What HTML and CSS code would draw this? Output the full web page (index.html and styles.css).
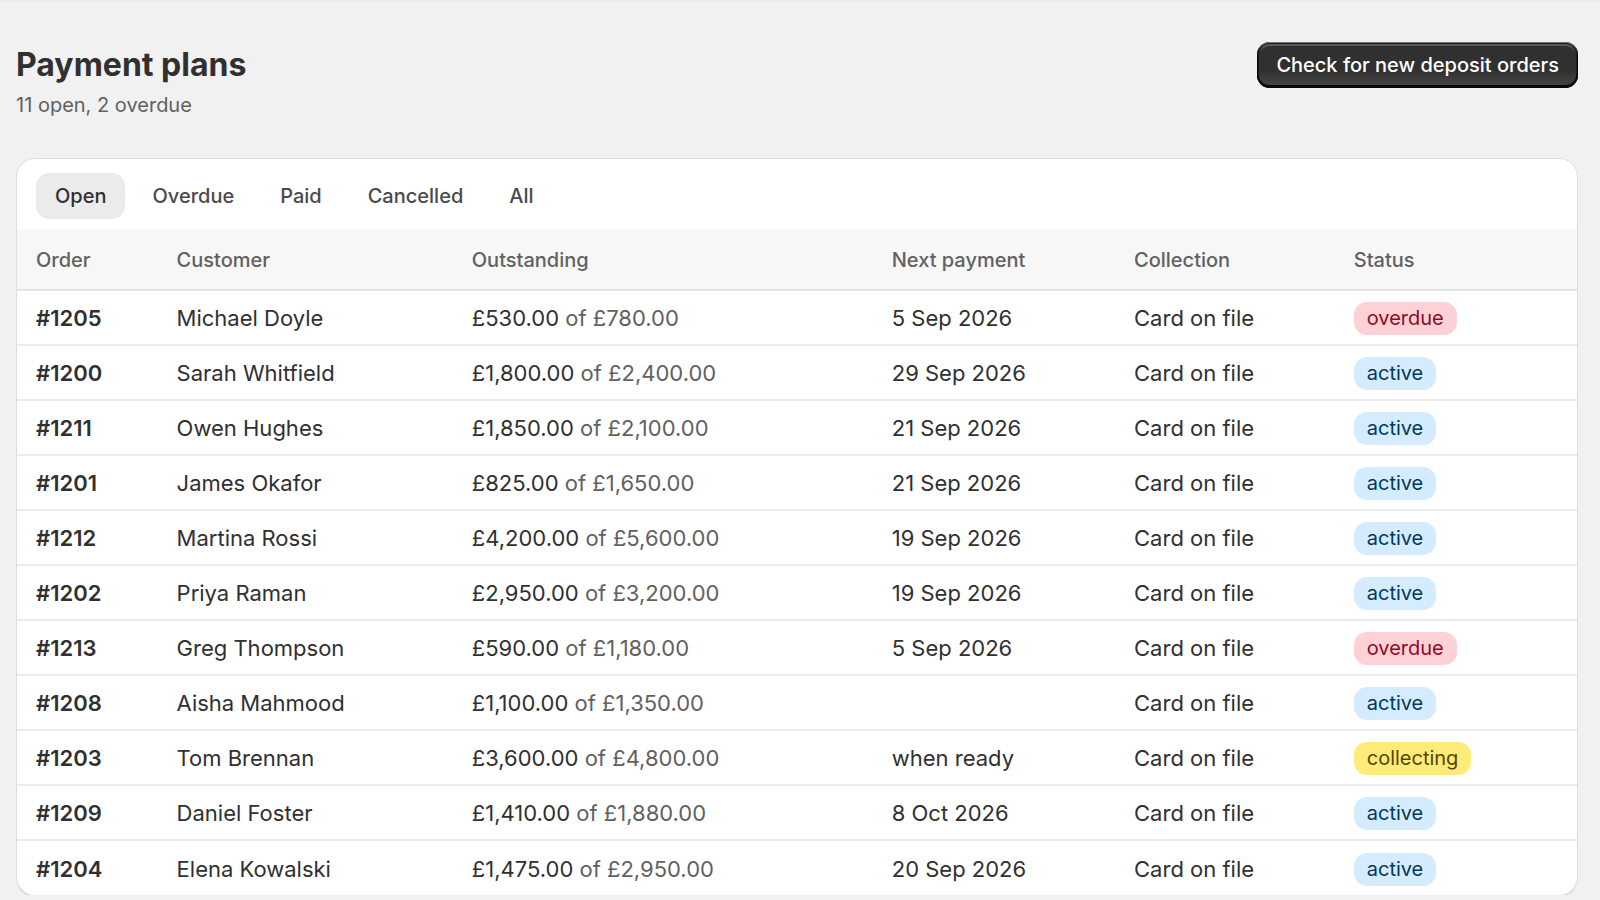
FILE: index.html
```html
<!DOCTYPE html>
<html lang="en">
	<head>
		<meta charset="utf-8" />
		<meta name="viewport" content="width=device-width, initial-scale=1" />
		<title>Payment plans</title>
		<link rel="stylesheet" href="styles.css">
	</head>
	<body>
		<main>
			<header>
				<div>
					<h1>Payment plans</h1>
					<p>11 open, 2 overdue</p>
				</div>
				<button type="button" class="primary">Check for new deposit orders</button>
			</header>

			<section class="card">
				<nav class="tabs">
					<button type="button" class="tab selected" aria-pressed="true">Open</button>
					<button type="button" class="tab">Overdue</button>
					<button type="button" class="tab">Paid</button>
					<button type="button" class="tab">Cancelled</button>
					<button type="button" class="tab">All</button>
				</nav>

				<table>
					<thead>
						<tr><th>Order</th><th>Customer</th><th>Outstanding</th><th>Next payment</th><th>Collection</th><th>Status</th></tr>
					</thead>
					<tbody>
						<tr><td>#1205</td><td>Michael Doyle</td><td>£530.00 <span class="total">of £780.00</span></td><td>5 Sep 2026</td><td>Card on file</td><td><span class="badge overdue">overdue</span></td></tr>
						<tr><td>#1200</td><td>Sarah Whitfield</td><td>£1,800.00 <span class="total">of £2,400.00</span></td><td>29 Sep 2026</td><td>Card on file</td><td><span class="badge active">active</span></td></tr>
						<tr><td>#1211</td><td>Owen Hughes</td><td>£1,850.00 <span class="total">of £2,100.00</span></td><td>21 Sep 2026</td><td>Card on file</td><td><span class="badge active">active</span></td></tr>
						<tr><td>#1201</td><td>James Okafor</td><td>£825.00 <span class="total">of £1,650.00</span></td><td>21 Sep 2026</td><td>Card on file</td><td><span class="badge active">active</span></td></tr>
						<tr><td>#1212</td><td>Martina Rossi</td><td>£4,200.00 <span class="total">of £5,600.00</span></td><td>19 Sep 2026</td><td>Card on file</td><td><span class="badge active">active</span></td></tr>
						<tr><td>#1202</td><td>Priya Raman</td><td>£2,950.00 <span class="total">of £3,200.00</span></td><td>19 Sep 2026</td><td>Card on file</td><td><span class="badge active">active</span></td></tr>
						<tr><td>#1213</td><td>Greg Thompson</td><td>£590.00 <span class="total">of £1,180.00</span></td><td>5 Sep 2026</td><td>Card on file</td><td><span class="badge overdue">overdue</span></td></tr>
						<tr><td>#1208</td><td>Aisha Mahmood</td><td>£1,100.00 <span class="total">of £1,350.00</span></td><td></td><td>Card on file</td><td><span class="badge active">active</span></td></tr>
						<tr><td>#1203</td><td>Tom Brennan</td><td>£3,600.00 <span class="total">of £4,800.00</span></td><td>when ready</td><td>Card on file</td><td><span class="badge collecting">collecting</span></td></tr>
						<tr><td>#1209</td><td>Daniel Foster</td><td>£1,410.00 <span class="total">of £1,880.00</span></td><td>8 Oct 2026</td><td>Card on file</td><td><span class="badge active">active</span></td></tr>
						<tr><td>#1204</td><td>Elena Kowalski</td><td>£1,475.00 <span class="total">of £2,950.00</span></td><td>20 Sep 2026</td><td>Card on file</td><td><span class="badge active">active</span></td></tr>
					</tbody>
				</table>
			</section>
		</main>
	</body>
</html>
```
FILE: styles.css
```css
:root {
	--text: #303030;
	--subdued: #616161;
	--line: #ebebeb;
}

* {
	box-sizing: border-box;
	margin: 0;
	padding: 0;
}

body {
	background: #f1f1f1;
	color: var(--text);
	font: 400 22px/33px Inter, sans-serif;
	border-top: 2px solid var(--line);
}

button {
	border: 0;
	font: inherit;
	cursor: pointer;
}

main {
	padding: 40px 22px 0 16px;
}

header {
	display: flex;
	justify-content: space-between;
	align-items: flex-start;
	margin-bottom: 37px;
}

h1 {
	margin-bottom: 1px;
	font-size: 32px;
	font-weight: 700;
	line-height: 46px;
}

header p {
	color: var(--subdued);
	font-size: 20px;
}

.primary {
	height: 46px;
	padding: 0 19px;
	border-radius: 13px;
	background: linear-gradient(#303030 63%, #4a4a4a);
	box-shadow: inset 0 1px 0 #777, inset 0 -2px 0 1px #0a0a0a, inset 0 0 0 2px #1a1a1a, inset 0 3px 0 1px #5a5a5a;
	color: #fff;
	font-size: 20px;
	font-weight: 500;
}

.card {
	overflow: hidden;
	margin: 0 1px;
	border-radius: 18px;
	background: #fff;
	box-shadow: 0 0 0 1px #dedede, 0 2px 1px #ccc;
}

.tabs {
	display: flex;
	gap: 8px;
	padding: 14px 19px 11px;
}

.tab {
	height: 46px;
	padding: 0 19px;
	border-radius: 13px;
	background: none;
	color: #4a4a4a;
	font-size: 20px;
	font-weight: 500;
}

.tab.selected {
	background: var(--line);
	color: var(--text);
}

table {
	width: 100%;
	border-collapse: collapse;
	text-align: left;
	white-space: nowrap;
}

th,
td {
	padding: 10px 10px 8px;
}

th:first-child,
td:first-child {
	padding-left: 19px;
}

th:last-child,
td:last-child {
	padding-right: 21px;
}

th {
	height: 60px;
	border-bottom: 2px solid #e3e3e3;
	background: #f7f7f7;
	color: var(--subdued);
	font-size: 20px;
	font-weight: 500;
}

td {
	height: 55px;
	border-top: 2px solid var(--line);
}

td:first-child {
	font-weight: 600;
}

.total {
	color: var(--subdued);
}

.badge {
	display: block;
	width: fit-content;
	padding: 0 13px;
	border-radius: 13px;
	font-size: 20px;
}

.active {
	background: #d5ebff;
	color: #003a5a;
}

.overdue {
	background: #fed1d7;
	color: #8e0b21;
}

.collecting {
	background: #ffeb78;
	color: #4f4700;
}
```
